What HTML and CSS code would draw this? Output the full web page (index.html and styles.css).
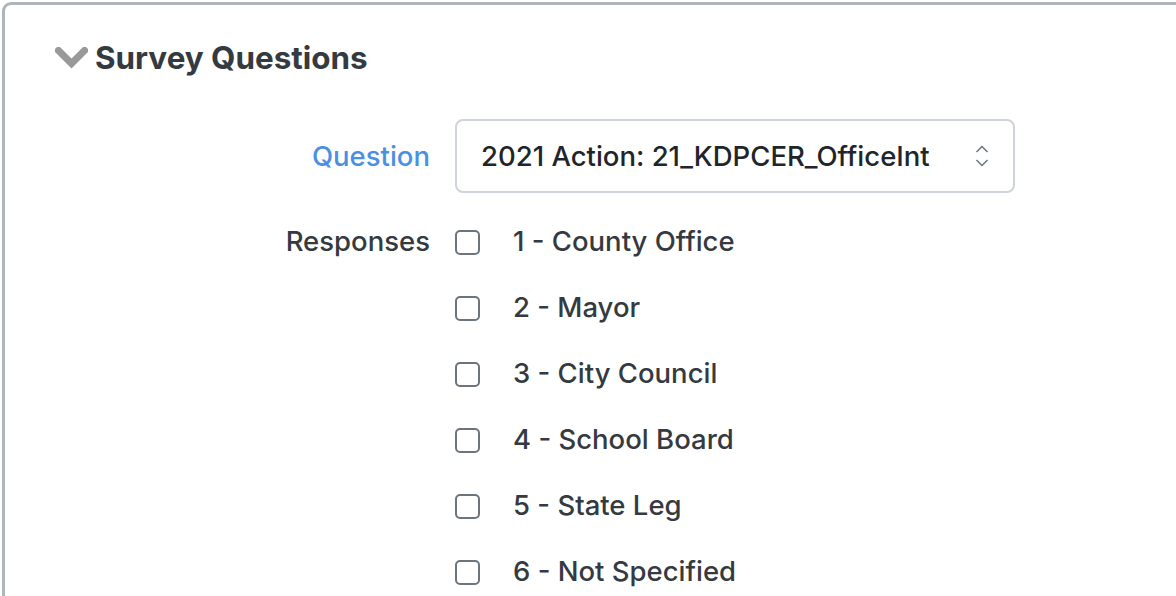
FILE: index.html
```html
<!DOCTYPE html>
<html>
<head>
<meta charset="utf-8">
<link rel="stylesheet" href="styles.css">
</head>
<body>
<div class="panel">
  <div class="panel-header">
    <svg class="chevron" width="33" height="22" viewBox="0 0 33 22"><path d="M3.5 3.5 L16.5 16.5 L29.5 3.5" fill="none" stroke="#999999" stroke-width="7" stroke-linejoin="miter" stroke-linecap="square"/></svg>
    <h2 class="title">Survey Questions</h2>
  </div>
  <div class="form">
    <label class="label label-link">Question</label>
    <div class="select">
      <span class="select-text">2021 Action: 21_KDPCER_OfficeInt</span>
      <svg class="select-arrows" width="14" height="24" viewBox="0 0 14 24"><path d="M1.5 8 L7 2.5 L12.5 8 M1.5 16 L7 21.5 L12.5 16" fill="none" stroke="#6c757d" stroke-width="1.5"/></svg>
    </div>
    <label class="label label-resp">Responses</label>
    <div class="checks">
      <div class="check"><span class="box"></span><span class="check-label">1 - County Office</span></div>
      <div class="check"><span class="box"></span><span class="check-label">2 - Mayor</span></div>
      <div class="check"><span class="box"></span><span class="check-label">3 - City Council</span></div>
      <div class="check"><span class="box"></span><span class="check-label">4 - School Board</span></div>
      <div class="check"><span class="box"></span><span class="check-label">5 - State Leg</span></div>
      <div class="check"><span class="box"></span><span class="check-label">6 - Not Specified</span></div>
    </div>
  </div>
</div>
</body>
</html>
```
FILE: styles.css
```css
html, body {
  margin: 0;
  padding: 0;
  background: #ffffff;
  overflow: hidden;
  width: 1176px;
  height: 596px;
}
body {
  font-family: Inter, "Noto Sans", sans-serif;
  color: #343a40;
}
.panel {
  margin: 2px 0 0 2px;
  width: 1300px;
  height: 700px;
  border: 3px solid #adb5bd;
  border-radius: 9px;
  box-sizing: border-box;
  padding: 0 0 0 50px;
}
.panel-header {
  display: flex;
  align-items: center;
  gap: 7px;
  height: 106px;
}
.chevron {
  display: block;
}
.title {
  margin: 0;
  font-size: 31.4px;
  font-weight: 700;
  color: #343a40;
}
.form {
  display: grid;
  grid-template-columns: 375px 560px;
  column-gap: 25px;
  align-items: start;
  margin-top: 8px;
}
.label {
  text-align: right;
  font-size: 27.5px;
  font-weight: 500;
  line-height: 32px;
}
.label-link {
  color: #4a90e2;
  align-self: center;
}
.label-resp {
  margin-top: 32px;
  color: #343a40;
}
.select {
  box-sizing: border-box;
  height: 74px;
  border: 2px solid #ced4da;
  border-radius: 8px;
  display: flex;
  align-items: center;
  justify-content: space-between;
  padding: 0 24px 0 24px;
  color: #212529;
}
.select-text {
  font-size: 27.5px;
  font-weight: 500;
}
.select-arrows {
  display: block;
}
.checks {
  display: flex;
  flex-direction: column;
  margin-top: 16px;
}
.check {
  display: flex;
  align-items: center;
  height: 66px;
}
.box {
  box-sizing: border-box;
  width: 25px;
  height: 25px;
  border: 2px solid #6c757d;
  border-radius: 5px;
  flex: none;
}
.check-label {
  margin-left: 33px;
  margin-top: -2px;
  font-size: 27.5px;
  font-weight: 500;
  color: #343a40;
}
```
